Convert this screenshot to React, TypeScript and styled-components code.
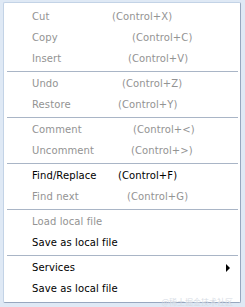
import styled, { createGlobalStyle } from "styled-components";

const GlobalStyle = createGlobalStyle`
  html, body {
    margin: 0;
    padding: 0;
    background: #dfe9f5;
  }
  body {
    width: 245px;
    height: 307px;
    overflow: hidden;
  }
`;

type Entry =
  | { kind: "item"; label: string; shortcut?: string; at?: number; disabled?: boolean; submenu?: boolean }
  | { kind: "sep" };

const entries: Entry[] = [
  { kind: "item", label: "Cut", shortcut: "(Control+X)", at: 112, disabled: true },
  { kind: "item", label: "Copy", shortcut: "(Control+C)", at: 132, disabled: true },
  { kind: "item", label: "Insert", shortcut: "(Control+V)", at: 128, disabled: true },
  { kind: "sep" },
  { kind: "item", label: "Undo", shortcut: "(Control+Z)", at: 122, disabled: true },
  { kind: "item", label: "Restore", shortcut: "(Control+Y)", at: 118, disabled: true },
  { kind: "sep" },
  { kind: "item", label: "Comment", shortcut: "(Control+<)", at: 133, disabled: true },
  { kind: "item", label: "Uncomment", shortcut: "(Control+>)", at: 131, disabled: true },
  { kind: "sep" },
  { kind: "item", label: "Find/Replace", shortcut: "(Control+F)", at: 118 },
  { kind: "item", label: "Find next", shortcut: "(Control+G)", at: 127, disabled: true },
  { kind: "sep" },
  { kind: "item", label: "Load local file", disabled: true },
  { kind: "item", label: "Save as local file" },
  { kind: "sep" },
  { kind: "item", label: "Services", submenu: true },
  { kind: "item", label: "Save as local file" },
];

const Screen = styled.div`
  position: relative;
  height: 307px;
  padding: 2px 4px 4px 3px;
  box-sizing: border-box;
`;

const Menu = styled.div`
  height: 301px;
  box-sizing: border-box;
  background: #ffffff;
  border: 1px solid #c3d3e6;
  border-right-color: #97a7bf;
  border-bottom-color: #97a7bf;
  border-radius: 2px;
  padding: 3px 2px 0 3px;
  display: flex;
  flex-direction: column;
  font-family: "DejaVu Sans", Verdana, sans-serif;
  font-size: 10px;
  letter-spacing: 0.1px;
`;

const Item = styled.div<{ $disabled?: boolean }>`
  height: 21px;
  display: flex;
  align-items: center;
  padding-left: 25px;
  padding-right: 8px;
  color: ${({ $disabled }) => ($disabled ? "#939393" : "#000000")};
  white-space: pre;
`;

const Label = styled.span<{ $width?: number }>`
  width: ${({ $width }) => ($width ? `${$width}px` : "auto")};
  flex: ${({ $width }) => ($width ? "none" : "1")};
`;

const Shortcut = styled.span``;

const Separator = styled.div`
  height: 1px;
  margin: 2px 0 1px 0;
  background: #a9b5c6;
`;

const Arrow = styled.span`
  width: 0;
  height: 0;
  border-top: 4px solid transparent;
  border-bottom: 4px solid transparent;
  border-left: 4px solid #000000;
`;

const Watermark = styled.span`
  position: absolute;
  right: 12px;
  bottom: 0;
  font-family: "Noto Sans CJK SC", sans-serif;
  font-size: 8px;
  line-height: 10px;
  color: #d5dbe4;
`;

export default function App() {
  return (
    <>
      <GlobalStyle />
      <Screen>
        <Menu>
          {entries.map((e, i) =>
            e.kind === "sep" ? (
              <Separator key={i} />
            ) : (
              <Item key={i} $disabled={e.disabled}>
                <Label $width={e.at ? e.at - 32 : undefined}>{e.label}</Label>
                {e.shortcut && <Shortcut>{e.shortcut}</Shortcut>}
                {e.submenu && <Arrow />}
              </Item>
            )
          )}
        </Menu>
        <Watermark>@稀土掘金技术社区</Watermark>
      </Screen>
    </>
  );
}
